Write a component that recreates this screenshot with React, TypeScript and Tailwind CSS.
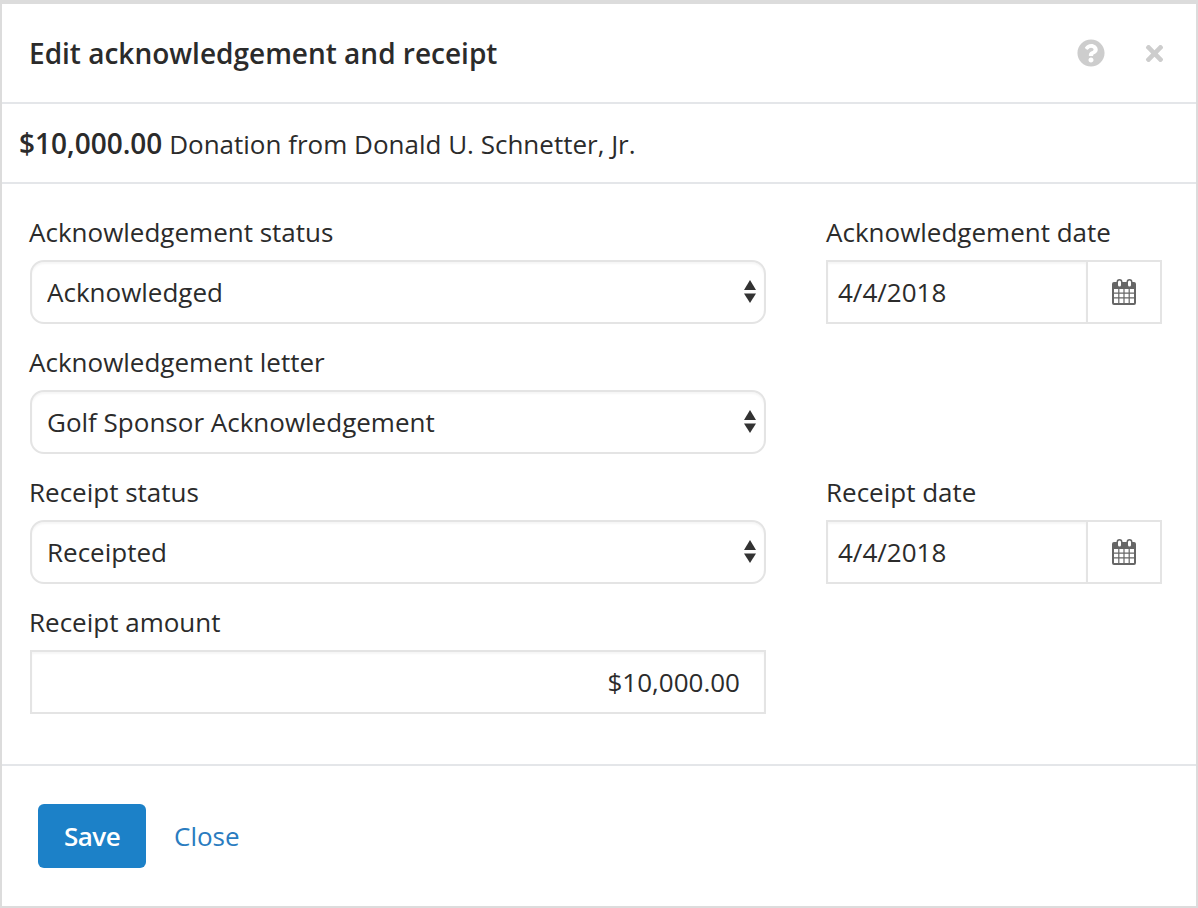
import React from 'react';
import { FaQuestionCircle, FaTimes } from 'react-icons/fa';

const fieldClass =
  'h-16 w-full border-2 border-[#e4e4e4] bg-white text-[26px] text-[#2b2b2b] shadow-[inset_0_2px_2px_rgba(0,0,0,0.04)] outline-none';

const Label = ({ children, left }: { children: React.ReactNode; left?: boolean }) => (
  <label className={`mb-[9px] block h-[37px] text-[26px] leading-[37px] text-[#2b2b2b] ${left ? '-ml-px' : ''}`}>
    {children}
  </label>
);

const SelectField = ({ label, value }: { label: string; value: string }) => (
  <div>
    <Label left>{label}</Label>
    <div className="relative">
      <select
        defaultValue={value}
        className={`${fieldClass} appearance-none rounded-[14px] pl-[15px] pr-10`}
      >
        <option>{value}</option>
      </select>
      <svg className="pointer-events-none absolute right-[10px] top-5 h-[23px] w-3" viewBox="0 0 12 23" fill="#333">
        <path d="M6 0 L12 10 H0 Z" />
        <path d="M0 13.5 H12 L6 23 Z" />
      </svg>
    </div>
  </div>
);

const CalendarIcon = () => (
  <svg width="24" height="26" viewBox="0 0 24 26" fill="none">
    <path
      fillRule="evenodd"
      fill="#666"
      d="M2 3h20a2 2 0 0 1 2 2v19a2 2 0 0 1-2 2H2a2 2 0 0 1-2-2V5a2 2 0 0 1 2-2ZM2 10v3.5h4.2V10ZM7.4 10v3.5h4V10ZM12.6 10v3.5h4V10ZM17.8 10v3.5H22V10ZM2 14.7v3.6h4.2v-3.6ZM7.4 14.7v3.6h4v-3.6ZM12.6 14.7v3.6h4v-3.6ZM17.8 14.7v3.6H22v-3.6ZM2 19.5V24h4.2v-4.5ZM7.4 19.5V24h4v-4.5ZM12.6 19.5V24h4v-4.5ZM17.8 19.5V24H22v-4.5Z"
    />
    <rect x="5.25" y="0.75" width="4.5" height="7.5" rx="2.25" fill="#fff" stroke="#666" strokeWidth="1.5" />
    <rect x="15.25" y="0.75" width="4.5" height="7.5" rx="2.25" fill="#fff" stroke="#666" strokeWidth="1.5" />
  </svg>
);

const DateField = ({ label, value }: { label: string; value: string }) => (
  <div>
    <Label>{label}</Label>
    <div className="flex">
      <input
        readOnly
        value={value}
        className={`${fieldClass} min-w-0 flex-1 px-[10px]`}
      />
      <div className="flex h-16 w-[74px] items-center justify-center border-y-2 border-r-2 border-[#e4e4e4] bg-white">
        <CalendarIcon />
      </div>
    </div>
  </div>
);

const App = () => {
  return (
    <div
      className="h-[908px] w-[1198px] overflow-hidden border-x-2 border-t-4 border-b-2 border-[#dcdcdc] bg-white text-[#2b2b2b]"
      style={{ fontFamily: '"Open Sans", sans-serif' }}
    >
      <div className="flex h-[100px] items-center justify-between border-b-2 border-[#e4e6e9] pl-[27px] pr-[29px]">
        <h1 className="text-[28px] font-semibold text-[#2b2b2b]">Edit acknowledgement and receipt</h1>
        <div className="flex items-center gap-[37px]">
          <FaQuestionCircle className="text-[28px] text-[#cdcdcd]" />
          <FaTimes className="text-[25px] text-[#cdcdcd]" />
        </div>
      </div>

      <div className="flex h-20 items-center border-b-2 border-[#e4e6e9] pl-[17px] text-[26px]">
        <p>
          <span className="text-[28px] font-semibold">$10,000.00</span> Donation from Donald U. Schnetter, Jr.
        </p>
      </div>

      <div className="grid grid-cols-[736px_336px] gap-x-[60px] gap-y-[20px] pl-7 pt-[30px]">
        <SelectField label="Acknowledgement status" value="Acknowledged" />
        <DateField label="Acknowledgement date" value="4/4/2018" />
        <div className="col-start-1">
          <SelectField label="Acknowledgement letter" value="Golf Sponsor Acknowledgement" />
        </div>
        <div className="col-start-1">
          <SelectField label="Receipt status" value="Receipted" />
        </div>
        <DateField label="Receipt date" value="4/4/2018" />
        <div className="col-start-1">
          <Label left>Receipt amount</Label>
          <input readOnly value="$10,000.00" className={`${fieldClass} px-6 text-right`} />
        </div>
      </div>

      <div className="mt-[50px] flex h-[142px] items-start gap-7 border-t-2 border-[#e4e6e9] pl-9 pt-[38px]">
        <button className="h-16 w-[108px] rounded-md bg-[#1c81c8] text-[26px] font-semibold tracking-[-0.5px] text-white">Save</button>
        <a className="flex h-16 items-center text-[26px] text-[#2a7cc0]">Close</a>
      </div>
    </div>
  );
};

export default App;
